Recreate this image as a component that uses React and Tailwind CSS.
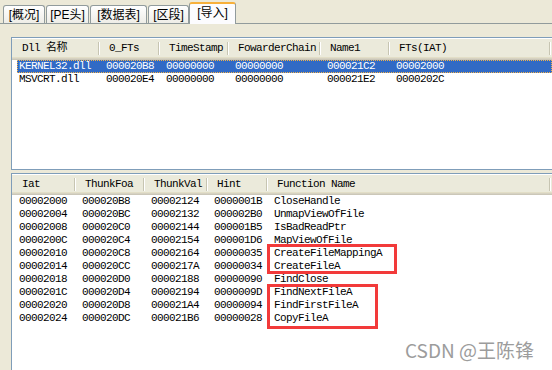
import React from "react";

const mono = "font-['Liberation_Mono','Noto_Sans_CJK_SC',monospace] text-[11px] tracking-[-0.6px]";

const dllCols = "grid grid-cols-[88px_60px_69px_92px_69px_161px]";
const dllRowCols = "grid grid-cols-[83px_60px_69px_92px_69px_161px]";
const impCols = "grid grid-cols-[64px_69px_63px_60px_283px]";
const impRowCols = "grid grid-cols-[59px_69px_63px_60px_283px]";

const dllHeaders = ["Dll 名称", "0_FTs", "TimeStamp", "FowarderChain", "Name1", "FTs(IAT)"];
const dlls = [
  ["KERNEL32.dll", "000020B8", "00000000", "00000000", "000021C2", "00002000"],
  ["MSVCRT.dll", "000020E4", "00000000", "00000000", "000021E2", "0000202C"],
];

const impHeaders = ["Iat", "ThunkFoa", "ThunkVal", "Hint", "Function Name"];
const imports = [
  ["00002000", "000020B8", "00002124", "0000001B", "CloseHandle"],
  ["00002004", "000020BC", "00002132", "000002B0", "UnmapViewOfFile"],
  ["00002008", "000020C0", "00002144", "000001B5", "IsBadReadPtr"],
  ["0000200C", "000020C4", "00002154", "000001D6", "MapViewOfFile"],
  ["00002010", "000020C8", "00002164", "00000035", "CreateFileMappingA"],
  ["00002014", "000020CC", "0000217A", "00000034", "CreateFileA"],
  ["00002018", "000020D0", "00002188", "00000090", "FindClose"],
  ["0000201C", "000020D4", "00002194", "0000009D", "FindNextFileA"],
  ["00002020", "000020D8", "000021A4", "00000094", "FindFirstFileA"],
  ["00002024", "000020DC", "000021B6", "00000028", "CopyFileA"],
];

const tabs = [
  { label: "[概况]", w: "w-[42px]" },
  { label: "[PE头]", w: "w-[43px]" },
  { label: "[数据表]", w: "w-[57px]" },
  { label: "[区段]", w: "w-[41px]" },
];

function Header({ cols, labels, h }) {
  return (
    <div
      className={`${cols} ${h} bg-[#EBEADB] shadow-[inset_0_-1px_0_#CBC7B8,inset_0_-2px_0_#D6D2C2,inset_0_-3px_0_#E2DEC7]`}
    >
      {labels.map((l, i) => (
        <div key={i} className="flex items-center justify-between pb-[2px]">
          <span className={`${i === 0 ? "pl-[10px]" : "pl-[9px]"} whitespace-nowrap`}>{l}</span>
          <span className="h-[13px] w-[2px] border-l border-[#C7C5B2] border-r border-r-white" />
        </div>
      ))}
    </div>
  );
}

export default function App() {
  return (
    <div className="relative w-[552px] h-[370px] overflow-hidden bg-[#ECE9D8] flex flex-col text-black">
      {/* Tabs */}
      <div className="flex items-end h-[24px] shrink-0 border-b border-[#919B9C] pl-[3px] font-['Liberation_Sans','Noto_Sans_CJK_SC',sans-serif] text-[12px]">
        {tabs.map((t) => (
          <div
            key={t.label}
            className={`${t.w} h-[18px] mr-px flex items-center justify-center border border-b-0 border-[#919B9C] rounded-t-[3px] bg-gradient-to-b from-white to-[#EEEDE7] leading-none`}
          >
            {t.label}
          </div>
        ))}
        <div className="relative z-10 -mb-px -ml-px w-[47px] h-[22px] flex items-center justify-center border border-b-0 border-[#919B9C] border-t-2 border-t-[#F7B03A] rounded-t-[3px] bg-[#FCFCFE] leading-none pb-[2px]">
          [导入]
        </div>
      </div>

      <div className={`flex-1 flex flex-col pl-[11px] pt-[13px] ${mono}`}>
        {/* DLL list */}
        <div className="h-[133px] shrink-0 bg-white border-l border-t border-b border-[#7F9DB9] pt-px">
          <Header cols={dllCols} labels={dllHeaders} h="h-[21px]" />
          <div className="flex flex-col">
            {dlls.map((r, i) => (
              <div key={i} className="pl-[5px]">
                <div
                  className={`${dllRowCols} h-[13px] items-center leading-none ${
                    i === 0
                      ? "bg-[#316AC5] text-white border border-dotted border-[#F2B24A]"
                      : "border border-transparent"
                  }`}
                >
                  {r.map((c, j) => (
                    <span key={j} className={`${j === 0 ? "pl-px" : "pl-[5px]"} whitespace-nowrap`}>
                      {c}
                    </span>
                  ))}
                </div>
              </div>
            ))}
          </div>
        </div>

        {/* Import list */}
        <div className="mt-[3px] flex-1 bg-white border-l border-t border-[#7F9DB9] pt-px">
          <Header cols={impCols} labels={impHeaders} h="h-[20px]" />
          <div className="flex flex-col">
            {imports.map((r, i) => (
              <div key={i} className={`${impRowCols} ml-[5px] h-[13px] items-center leading-none`}>
                {r.map((c, j) => (
                  <span key={j} className={`${j === 0 ? "pl-[2px]" : "pl-[6px]"} whitespace-nowrap`}>
                    {c}
                  </span>
                ))}
              </div>
            ))}
          </div>
        </div>
      </div>

      {/* Annotation boxes */}
      <div className="absolute left-[267px] top-[244px] w-[130px] h-[30px] border-[3px] border-[#F23A3A]" />
      <div className="absolute left-[267px] top-[284px] w-[111px] h-[45px] border-[3px] border-[#F23A3A]" />

      {/* Watermark */}
      <div className="absolute left-[405px] top-[340px] text-[19px] leading-none text-[#9c9c9c] font-['Noto_Sans_CJK_SC',sans-serif] [text-shadow:0_0_2px_#ffffff]">
        CSDN @王陈锋
      </div>
    </div>
  );
}
